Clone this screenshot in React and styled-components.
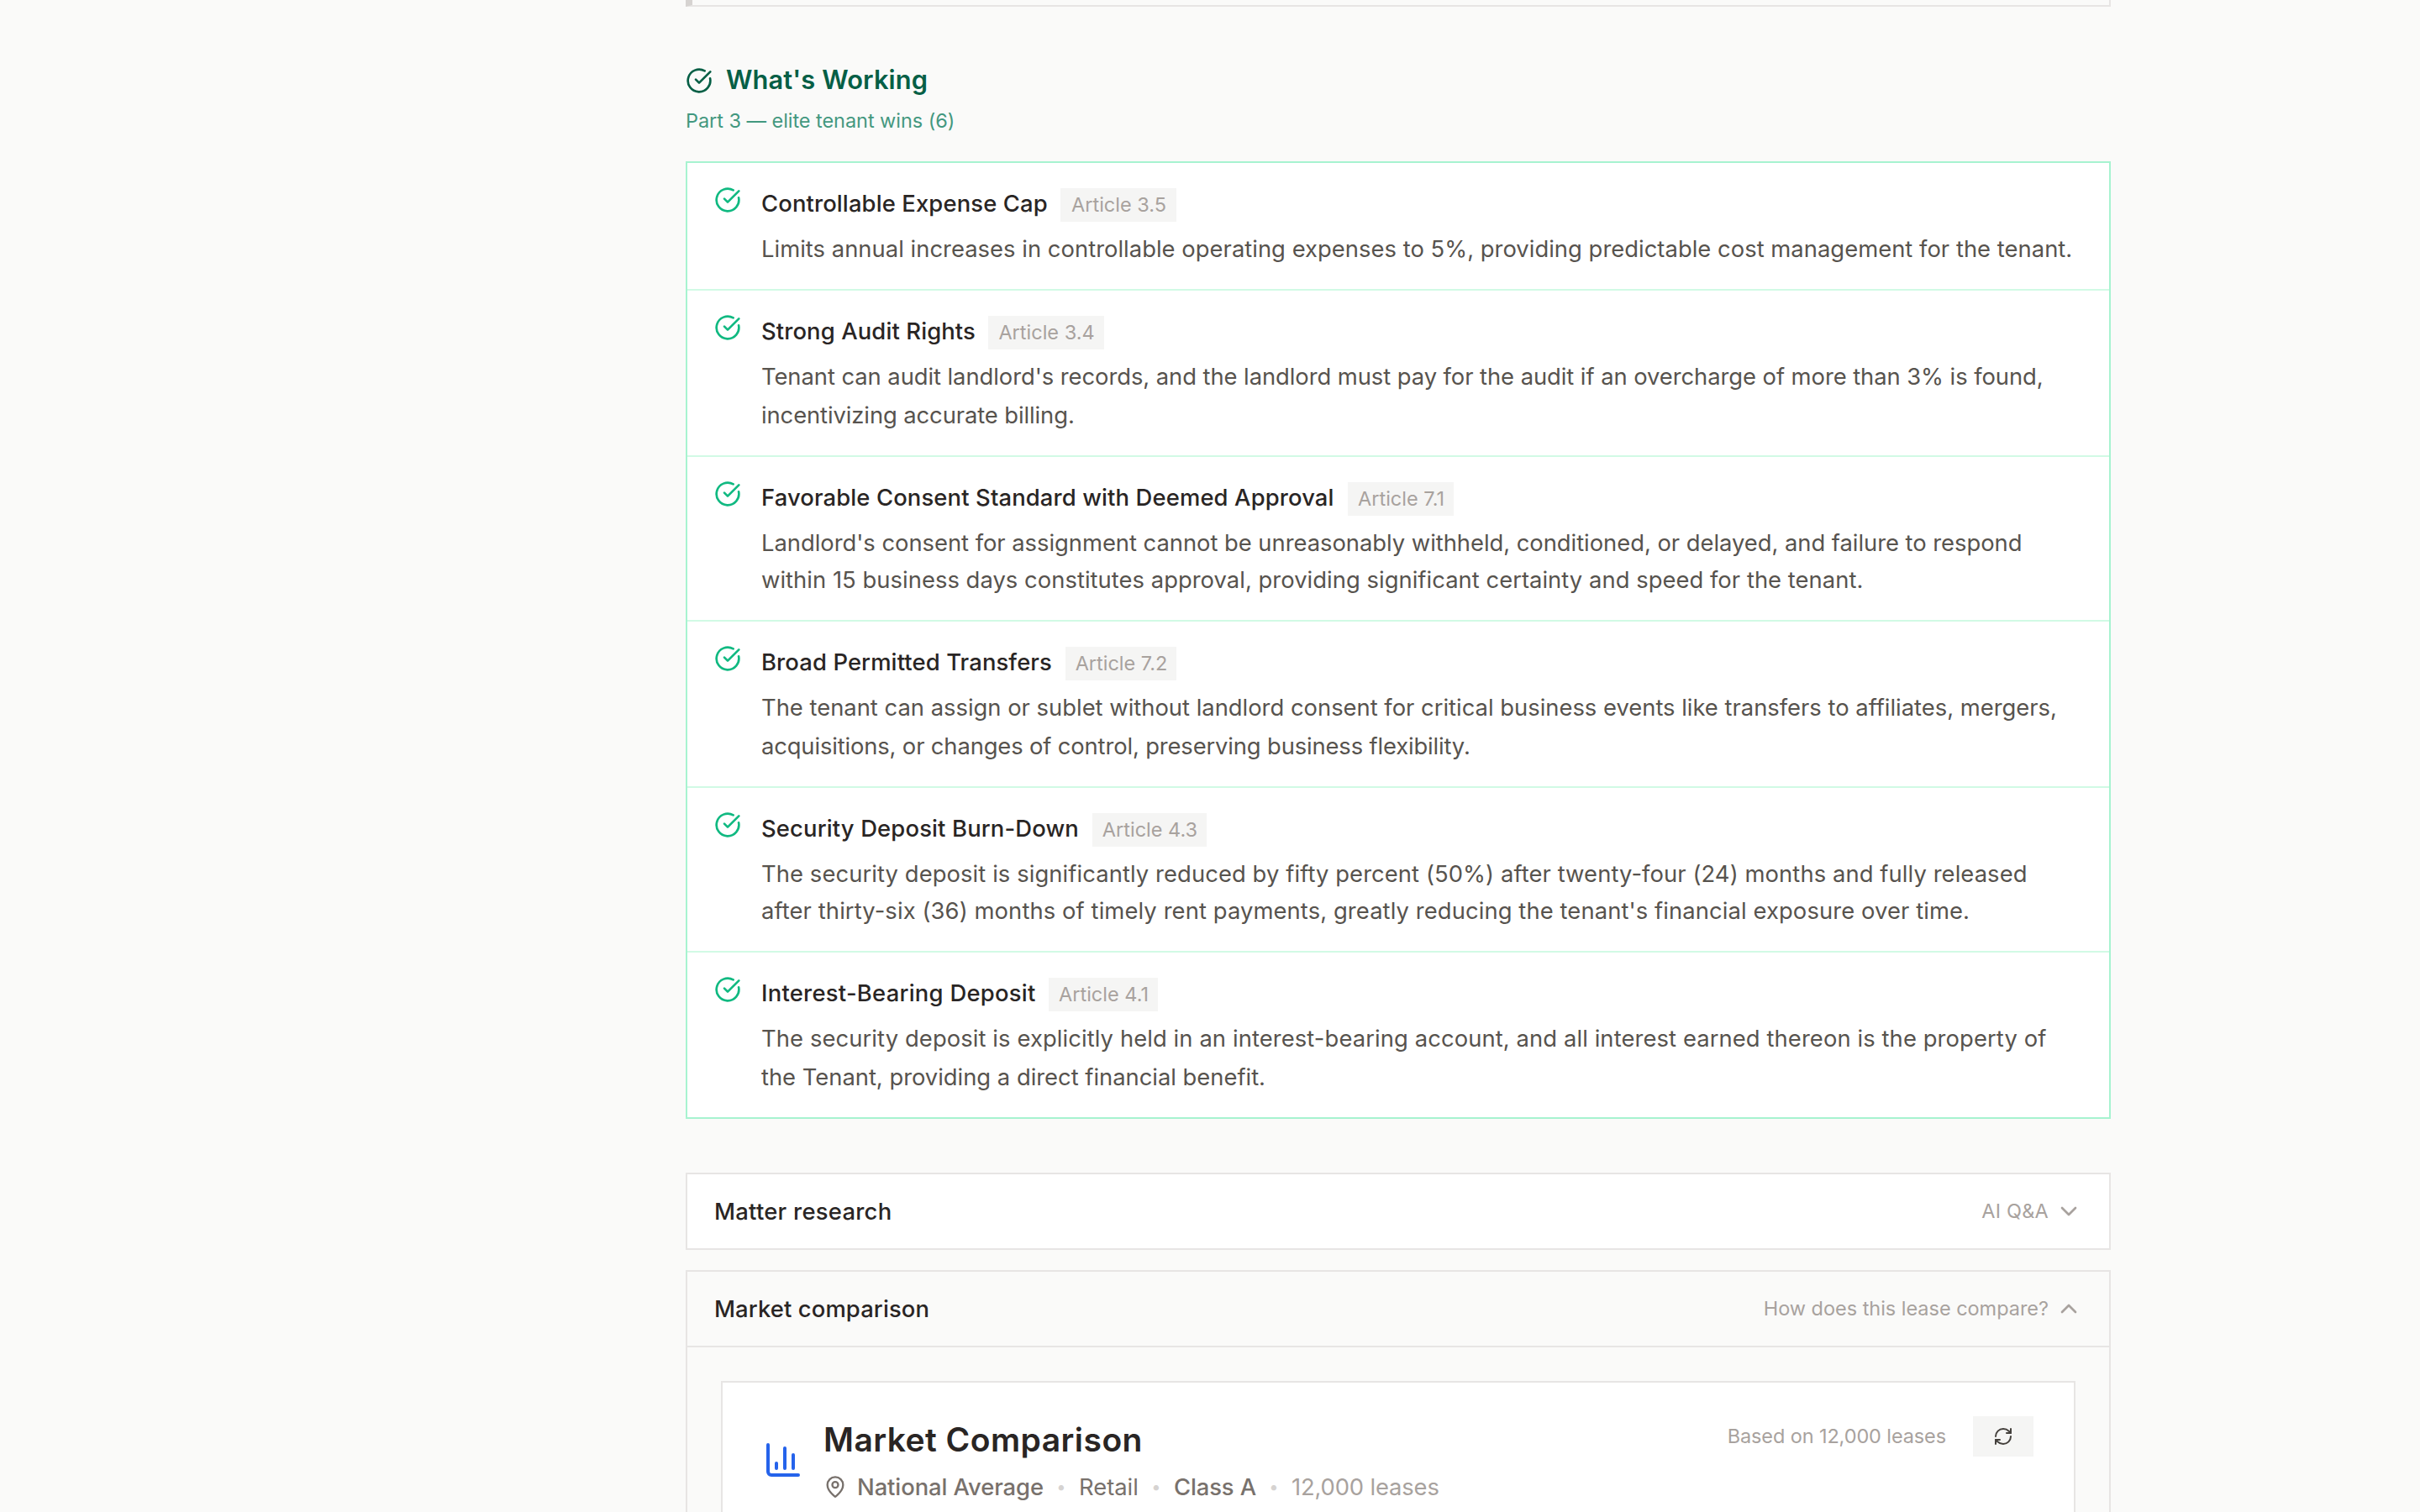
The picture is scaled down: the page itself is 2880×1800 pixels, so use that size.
import React from 'react';
import styled, { createGlobalStyle, css } from 'styled-components';
import {
  CircleCheckBig,
  ChevronDown,
  ChevronUp,
  ChartColumn,
  MapPin,
  RefreshCw,
} from 'lucide-react';

const GlobalStyle = createGlobalStyle`
  *, *::before, *::after { box-sizing: border-box; }
  html, body { margin: 0; padding: 0; }
  body {
    background: #fafaf9;
    color: #292524;
    font-family: Inter, 'Liberation Sans', sans-serif;
    font-size: 27.4px;
    line-height: 40px;
    overflow: hidden;
  }
  h2, h3, h4, p, ul { margin: 0; padding: 0; }
  svg { display: block; flex: none; }
`;

const tracking = css`
  letter-spacing: ${(p) => p.$track || 0}px;
  white-space: nowrap;
`;

const Page = styled.main`
  width: 2880px;
  height: 1800px;
  padding-left: 816px;
  overflow: hidden;
`;

const Column = styled.div`
  display: flex;
  flex-direction: column;
  width: 1696px;
`;

const PreviousCard = styled.div`
  height: 8px;
  background: #fafaf9;
  border: solid #e7e5e4;
  border-width: 0 2px 2px 8px;
  border-left-color: #d6d3d1;
`;

const SectionHead = styled.header`
  display: flex;
  flex-direction: column;
  padding-top: 72px;
  height: 184px;
`;

const SectionTitle = styled.h2`
  display: flex;
  align-items: center;
  gap: 16px;
  height: 32px;
  color: #065f46;
  font-size: 30.8px;
  font-weight: 600;
  line-height: 40px;
  ${tracking}
  & > span {
    padding-bottom: 2px;
  }
`;

const SectionNote = styled.p`
  margin-top: 12px;
  color: #047857;
  opacity: 0.75;
  font-size: 23.5px;
  line-height: 40px;
  ${tracking}
`;

const WinList = styled.ul`
  list-style: none;
  background: #fff;
  border: 2px solid #a7f3d0;
`;

const WinItem = styled.li`
  display: flex;
  gap: 24px;
  height: ${(p) => p.$height}px;
  padding: 28px 32px 0;
  & + & {
    border-top: 2px solid #d1fae5;
  }
  & > svg {
    color: #10b981;
  }
`;

const WinHead = styled.div`
  display: flex;
  align-items: flex-start;
  gap: 16px;
  height: 42px;
`;

const WinTitle = styled.h3`
  width: ${(p) => p.$width}px;
  font-size: 27.4px;
  font-weight: 500;
  line-height: 40px;
  ${tracking}
`;

const ArticleTag = styled.span`
  width: ${(p) => p.$width}px;
  height: 40px;
  margin-top: 2px;
  padding-left: 1px;
  background: #f5f5f4;
  color: #a8a29e;
  font-size: 23.5px;
  line-height: 39px;
  text-align: center;
  white-space: nowrap;
`;

const WinText = styled.p`
  margin-top: ${(p) => 9 + (46 - p.$leading) / 2}px;
  color: #57534e;
  line-height: ${(p) => p.$leading}px;
`;

const Line = styled.span`
  display: block;
  ${tracking}
`;

const Panel = styled.section`
  margin-top: ${(p) => p.$gap}px;
  border: 2px solid #e7e5e4;
  background: ${(p) => (p.$open ? '#fafaf9' : '#fff')};
`;

const PanelHead = styled.header`
  display: flex;
  align-items: center;
  justify-content: space-between;
  height: 88px;
  padding: 0 32px;
`;

const PanelTitle = styled.h3`
  font-size: 27.4px;
  font-weight: 500;
  ${tracking}
`;

const PanelHint = styled.div`
  display: flex;
  align-items: center;
  gap: 8px;
  color: #a8a29e;
  font-size: 23.5px;
  ${tracking}
`;

const PanelBody = styled.div`
  padding: 40px;
  border-top: 2px solid #e7e5e4;
`;

const MarketCard = styled.article`
  display: flex;
  justify-content: space-between;
  align-items: flex-start;
  height: 400px;
  padding: 40px 48px;
  background: #fff;
  border: 2px solid #e7e5e4;
`;

const MarketIntro = styled.div`
  display: flex;
  align-items: center;
  gap: 24px;
  & > svg {
    color: #2563eb;
  }
`;

const MarketTitle = styled.h4`
  font-size: 39px;
  font-weight: 600;
  line-height: 56px;
  ${tracking}
`;

const MarketMeta = styled.div`
  display: flex;
  align-items: center;
  gap: 16px;
  height: 40px;
  margin-top: 8px;
  color: #78716c;
`;

const Place = styled.span`
  display: flex;
  align-items: center;
  gap: 12px;
  font-weight: 500;
  ${tracking}
`;

const MetaItem = styled.span`
  font-weight: ${(p) => (p.$strong ? 500 : 400)};
  color: ${(p) => (p.$muted ? '#a8a29e' : 'inherit')};
  ${tracking}
`;

const Bullet = styled.span`
  width: 10px;
  display: flex;
  justify-content: center;
  color: #d6d3d1;
  font-size: 20px;
`;

const MarketActions = styled.div`
  display: flex;
  align-items: center;
  gap: 32px;
  height: 48px;
  color: #a8a29e;
  font-size: 23.5px;
`;

const RefreshButton = styled.button`
  display: flex;
  align-items: center;
  justify-content: center;
  width: 72px;
  height: 48px;
  padding: 0;
  border: 0;
  background: #f5f5f4;
  color: #44403c;
`;

const wins = [
  {
    title: 'Controllable Expense Cap', width: 340, track: 0.13,
    article: 'Article 3.5', tag: 138, height: 150, leading: 46,
    lines: [['Limits annual increases in controllable operating expenses to 5%, providing predictable cost management for the tenant.', 0.02]],
  },
  {
    title: 'Strong Audit Rights', width: 254, track: 0.12,
    article: 'Article 3.4', tag: 138, height: 198, leading: 46,
    lines: [
      ["Tenant can audit landlord's records, and the landlord must pay for the audit if an overcharge of more than 3% is found,", -0.07],
      ['incentivizing accurate billing.', -0.1],
    ],
  },
  {
    title: 'Favorable Consent Standard with Deemed Approval', width: 682, track: 0.13,
    article: 'Article 7.1', tag: 126, height: 196, leading: 44,
    lines: [
      ["Landlord's consent for assignment cannot be unreasonably withheld, conditioned, or delayed, and failure to respond", -0.04],
      ['within 15 business days constitutes approval, providing significant certainty and speed for the tenant.', 0.03],
    ],
  },
  {
    title: 'Broad Permitted Transfers', width: 346, track: 0.12,
    article: 'Article 7.2', tag: 132, height: 198, leading: 46,
    lines: [
      ['The tenant can assign or sublet without landlord consent for critical business events like transfers to affiliates, mergers,', -0.01],
      ['acquisitions, or changes of control, preserving business flexibility.', -0.15],
    ],
  },
  {
    title: 'Security Deposit Burn-Down', width: 378, track: 0.15,
    article: 'Article 4.3', tag: 136, height: 196, leading: 44,
    lines: [
      ['The security deposit is significantly reduced by fifty percent (50%) after twenty-four (24) months and fully released', 0.08],
      ["after thirty-six (36) months of timely rent payments, greatly reducing the tenant's financial exposure over time.", 0.09],
    ],
  },
  {
    title: 'Interest-Bearing Deposit', width: 326, track: 0.26,
    article: 'Article 4.1', tag: 130, height: 198, leading: 46,
    lines: [
      ['The security deposit is explicitly held in an interest-bearing account, and all interest earned thereon is the property of', 0.09],
      ['the Tenant, providing a direct financial benefit.', -0.02],
    ],
  },
];

export default function App() {
  return (
    <>
      <GlobalStyle />
      <Page>
        <Column>
          <PreviousCard />

          <SectionHead>
            <SectionTitle $track={0.12}>
              <CircleCheckBig size={32} strokeWidth={2} />
              <span>What's Working</span>
            </SectionTitle>
            <SectionNote $track={-0.05}>Part 3 — elite tenant wins (6)</SectionNote>
          </SectionHead>

          <WinList>
            {wins.map((win) => (
              <WinItem key={win.title} $height={win.height}>
                <CircleCheckBig size={32} strokeWidth={2} />
                <div>
                  <WinHead>
                    <WinTitle $width={win.width} $track={win.track}>{win.title}</WinTitle>
                    <ArticleTag $width={win.tag}>{win.article}</ArticleTag>
                  </WinHead>
                  <WinText $leading={win.leading}>
                    {win.lines.map(([text, track]) => (
                      <Line key={text} $track={track}>{text}</Line>
                    ))}
                  </WinText>
                </div>
              </WinItem>
            ))}
          </WinList>

          <Panel $gap={64}>
            <PanelHead>
              <PanelTitle $track={0.27}>Matter research</PanelTitle>
              <PanelHint $track={0.2}>
                AI Q&amp;A
                <ChevronDown size={32} strokeWidth={2} />
              </PanelHint>
            </PanelHead>
          </Panel>

          <Panel $gap={24} $open>
            <PanelHead>
              <PanelTitle $track={0.12}>Market comparison</PanelTitle>
              <PanelHint $track={-0.03}>
                How does this lease compare?
                <ChevronUp size={32} strokeWidth={2} />
              </PanelHint>
            </PanelHead>
            <PanelBody>
              <MarketCard>
                <MarketIntro>
                  <ChartColumn size={48} strokeWidth={2} />
                  <div>
                    <MarketTitle $track={0.45}>Market Comparison</MarketTitle>
                    <MarketMeta>
                      <Place $track={-0.08}>
                        <MapPin size={28} strokeWidth={2} />
                        National Average
                      </Place>
                      <Bullet>•</Bullet>
                      <MetaItem>Retail</MetaItem>
                      <Bullet>•</Bullet>
                      <MetaItem $strong $track={-0.1}>Class A</MetaItem>
                      <Bullet>•</Bullet>
                      <MetaItem $muted $track={-0.15}>12,000 leases</MetaItem>
                    </MarketMeta>
                  </div>
                </MarketIntro>
                <MarketActions>
                  <Line $track={-0.11}>Based on 12,000 leases</Line>
                  <RefreshButton aria-label="Refresh">
                    <RefreshCw size={24} strokeWidth={2} />
                  </RefreshButton>
                </MarketActions>
              </MarketCard>
            </PanelBody>
          </Panel>
        </Column>
      </Page>
    </>
  );
}
